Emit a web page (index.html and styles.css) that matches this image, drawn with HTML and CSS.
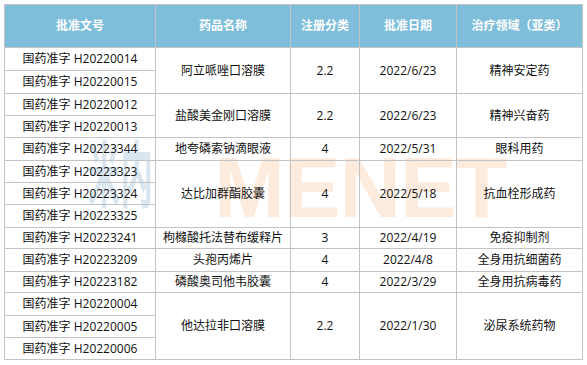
FILE: index.html
```html
<!DOCTYPE html>
<html lang="zh">
<head>
<meta charset="utf-8">
<link rel="stylesheet" href="styles.css">
</head>
<body>
<div class="wrap">
  <div class="wm wm-blue">米内</div>
  <div class="wm wm-orange">MENET</div>
  <table class="grid">
    <colgroup>
      <col class="c1"><col class="c2"><col class="c3"><col class="c4"><col class="c5">
    </colgroup>
    <thead>
      <tr class="head">
        <th>批准文号</th><th>药品名称</th><th>注册分类</th><th>批准日期</th><th>治疗领域（亚类）</th>
      </tr>
    </thead>
    <tbody>
      <tr class="ra"><td>国药准字 H20220014</td><td rowspan="2">阿立哌唑口溶膜</td><td rowspan="2">2.2</td><td rowspan="2">2022/6/23</td><td rowspan="2">精神安定药</td></tr>
      <tr class="ra"><td>国药准字 H20220015</td></tr>
      <tr class="rb"><td>国药准字 H20220012</td><td rowspan="2">盐酸美金刚口溶膜</td><td rowspan="2">2.2</td><td rowspan="2">2022/6/23</td><td rowspan="2">精神兴奋药</td></tr>
      <tr class="rb"><td>国药准字 H20220013</td></tr>
      <tr class="ra"><td>国药准字 H20223344</td><td>地夸磷索钠滴眼液</td><td>4</td><td>2022/5/31</td><td>眼科用药</td></tr>
      <tr class="rb"><td>国药准字 H20223323</td><td rowspan="3">达比加群酯胶囊</td><td rowspan="3">4</td><td rowspan="3">2022/5/18</td><td rowspan="3">抗血栓形成药</td></tr>
      <tr class="rb"><td>国药准字 H20223324</td></tr>
      <tr class="ra"><td>国药准字 H20223325</td></tr>
      <tr class="rc"><td>国药准字 H20223241</td><td>枸橼酸托法替布缓释片</td><td>3</td><td>2022/4/19</td><td>免疫抑制剂</td></tr>
      <tr class="ra"><td>国药准字 H20223209</td><td>头孢丙烯片</td><td>4</td><td>2022/4/8</td><td>全身用抗细菌药</td></tr>
      <tr class="rc"><td>国药准字 H20223182</td><td>磷酸奥司他韦胶囊</td><td>4</td><td>2022/3/29</td><td>全身用抗病毒药</td></tr>
      <tr class="ra"><td>国药准字 H20220004</td><td rowspan="3">他达拉非口溶膜</td><td rowspan="3">2.2</td><td rowspan="3">2022/1/30</td><td rowspan="3">泌尿系统药物</td></tr>
      <tr class="rb"><td>国药准字 H20220005</td></tr>
      <tr class="rb"><td>国药准字 H20220006</td></tr>
    </tbody>
  </table>
</div>
</body>
</html>
```

FILE: styles.css
```css
html, body {
  margin: 0;
  padding: 0;
  background: #ffffff;
}

body {
  padding: 4px;
  font-family: "Open Sans", "Noto Sans CJK SC", sans-serif;
  font-size: 12px;
  color: #111111;
}

.wrap {
  position: relative;
  width: 579px;
}

.grid {
  position: relative;
  z-index: 1;
  width: 579px;
  table-layout: fixed;
  border-collapse: collapse;
  background: transparent;
}

.c1 { width: 151px; }
.c2 { width: 135px; }
.c3 { width: 69px; }
.c4 { width: 97px; }
.c5 { width: 126px; }

.grid th,
.grid td {
  border: 1px solid #c3c3c3;
  padding: 0;
  text-align: center;
  vertical-align: middle;
  white-space: nowrap;
  line-height: 14px;
}

.head {
  height: 43px;
}

.grid th {
  background: #7fbedb;
  color: #ffffff;
  font-weight: bold;
}

.ra { height: 23px; }
.rb { height: 22px; }
.rc { height: 21px; }

.wm {
  position: absolute;
  z-index: 0;
  font-family: "Liberation Sans", "Noto Sans CJK SC", sans-serif;
  font-weight: bold;
  white-space: nowrap;
  line-height: 1;
}

.wm-blue {
  left: 84px;
  top: 136px;
  font-size: 72px;
  color: #d9e6ef;
  transform: scaleX(0.45);
  transform-origin: left top;
}

.wm-orange {
  left: 210px;
  top: 141px;
  font-size: 85px;
  color: #fdebdd;
  letter-spacing: -1px;
}
```
